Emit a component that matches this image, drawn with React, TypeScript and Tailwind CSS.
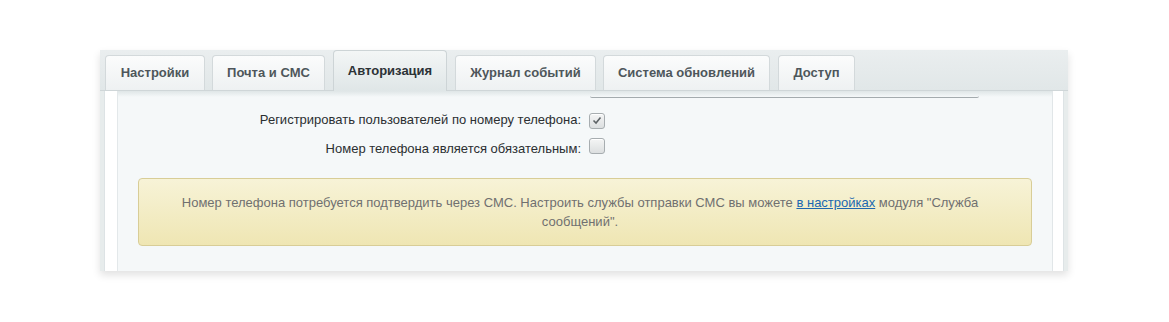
import React from "react";

const tabs = [
  { label: "Настройки", w: 100, ml: 5 },
  { label: "Почта и СМС", w: 113, ml: 7 },
  { label: "Авторизация", w: 114, ml: 8, active: true },
  { label: "Журнал событий", w: 141, ml: 8 },
  { label: "Система обновлений", w: 167, ml: 7 },
  { label: "Доступ", w: 77, ml: 8 },
];

function Check({ checked }: { checked?: boolean }) {
  return (
    <span className="inline-flex items-center justify-center w-[16px] h-[16px] rounded-[3px] border border-[#a7adb0] bg-gradient-to-b from-[#f4f5f5] to-[#dcdfe0] shadow-[inset_0_1px_0_#fff]">
      {checked && (
        <svg width="10" height="9" viewBox="0 0 10 9">
          <path d="M1.5 4.5 L4 7 L8.5 1.5" fill="none" stroke="#5d6366" strokeWidth="1.6" />
        </svg>
      )}
    </span>
  );
}

export default function App() {
  return (
    <div className="w-[1169px] h-[322px] bg-white pt-[50px] pl-[100px] font-['Liberation_Sans',Arial,sans-serif]">
      <div className="w-[968px] bg-[#e7ecec] shadow-[0_4px_8px_rgba(0,0,0,0.12)]">
        <div className="h-[41px] flex items-end bg-gradient-to-b from-[#eaeeef] to-[#e1e7e8] border-b border-[#cfd6d8]">
          {tabs.map((t) =>
            t.active ? (
              <div
                key={t.label}
                style={{ width: t.w, marginLeft: t.ml }}
                className="h-[41px] -mb-px flex items-center justify-center rounded-t-[4px] border border-b-0 border-[#cdd4d6] bg-gradient-to-b from-[#f3f6f6] to-[#dfe6e7] text-[13px] font-bold text-[#2c3236]"
              >
                {t.label}
              </div>
            ) : (
              <div
                key={t.label}
                style={{ width: t.w, marginLeft: t.ml }}
                className="h-[35px] flex items-center justify-center rounded-t-[4px] border border-b-0 border-[#d3d9db] bg-gradient-to-b from-[#fbfcfc] to-[#eef1f2] text-[13px] font-bold text-[#4e565b]"
              >
                {t.label}
              </div>
            )
          )}
        </div>
        <div className="flex h-[180px] border-l border-[#dde3e5] border-r border-[#d5dcde] ml-[4px] mr-[4px] bg-white">
          <div className="w-[13px] bg-white border-r border-[#e3e8ea]" />
          <div className="flex-1 bg-[#f5f8f9] border-r border-[#e1e6e8] relative">
            <div className="absolute top-0 left-0 right-0 h-[6px] bg-gradient-to-b from-[#dfe6e7] to-[#f5f8f9]" />
            <div className="absolute top-[5px] left-[472px] w-[389px] h-[2px] border-b border-[#a4abae] rounded-b-[2px]" />
            <div className="pt-[21px]">
              <div className="flex items-center h-[16px]">
                <div className="w-[463px] text-right text-[13px] text-[#2b2f31]">Регистрировать пользователей по номеру телефона:</div>
                <div className="ml-[8px]"><Check checked /></div>
              </div>
              <div className="flex items-center h-[16px] mt-[13px]">
                <div className="w-[463px] text-right text-[13px] text-[#2b2f31]">Номер телефона является обязательным:</div>
                <div className="ml-[8px]"><Check /></div>
              </div>
            </div>
            <div className="mt-[21px] ml-[20px] w-[894px] h-[68px] rounded-[4px] border border-[#d8cd97] bg-gradient-to-b from-[#f7f3d7] to-[#efe6b3] flex items-center justify-center pl-[27px] pr-[37px]">
              <p className="text-center text-[13px] leading-[19px] text-[#707070]">
                Номер телефона потребуется подтвердить через СМС. Настроить службы отправки СМС вы можете{" "}
                <a href="#" className="text-[#2067b0] underline">в настройках</a> модуля "Служба сообщений".
              </p>
            </div>
          </div>
          <div className="w-[10px] bg-white" />
        </div>
      </div>
    </div>
  );
}
